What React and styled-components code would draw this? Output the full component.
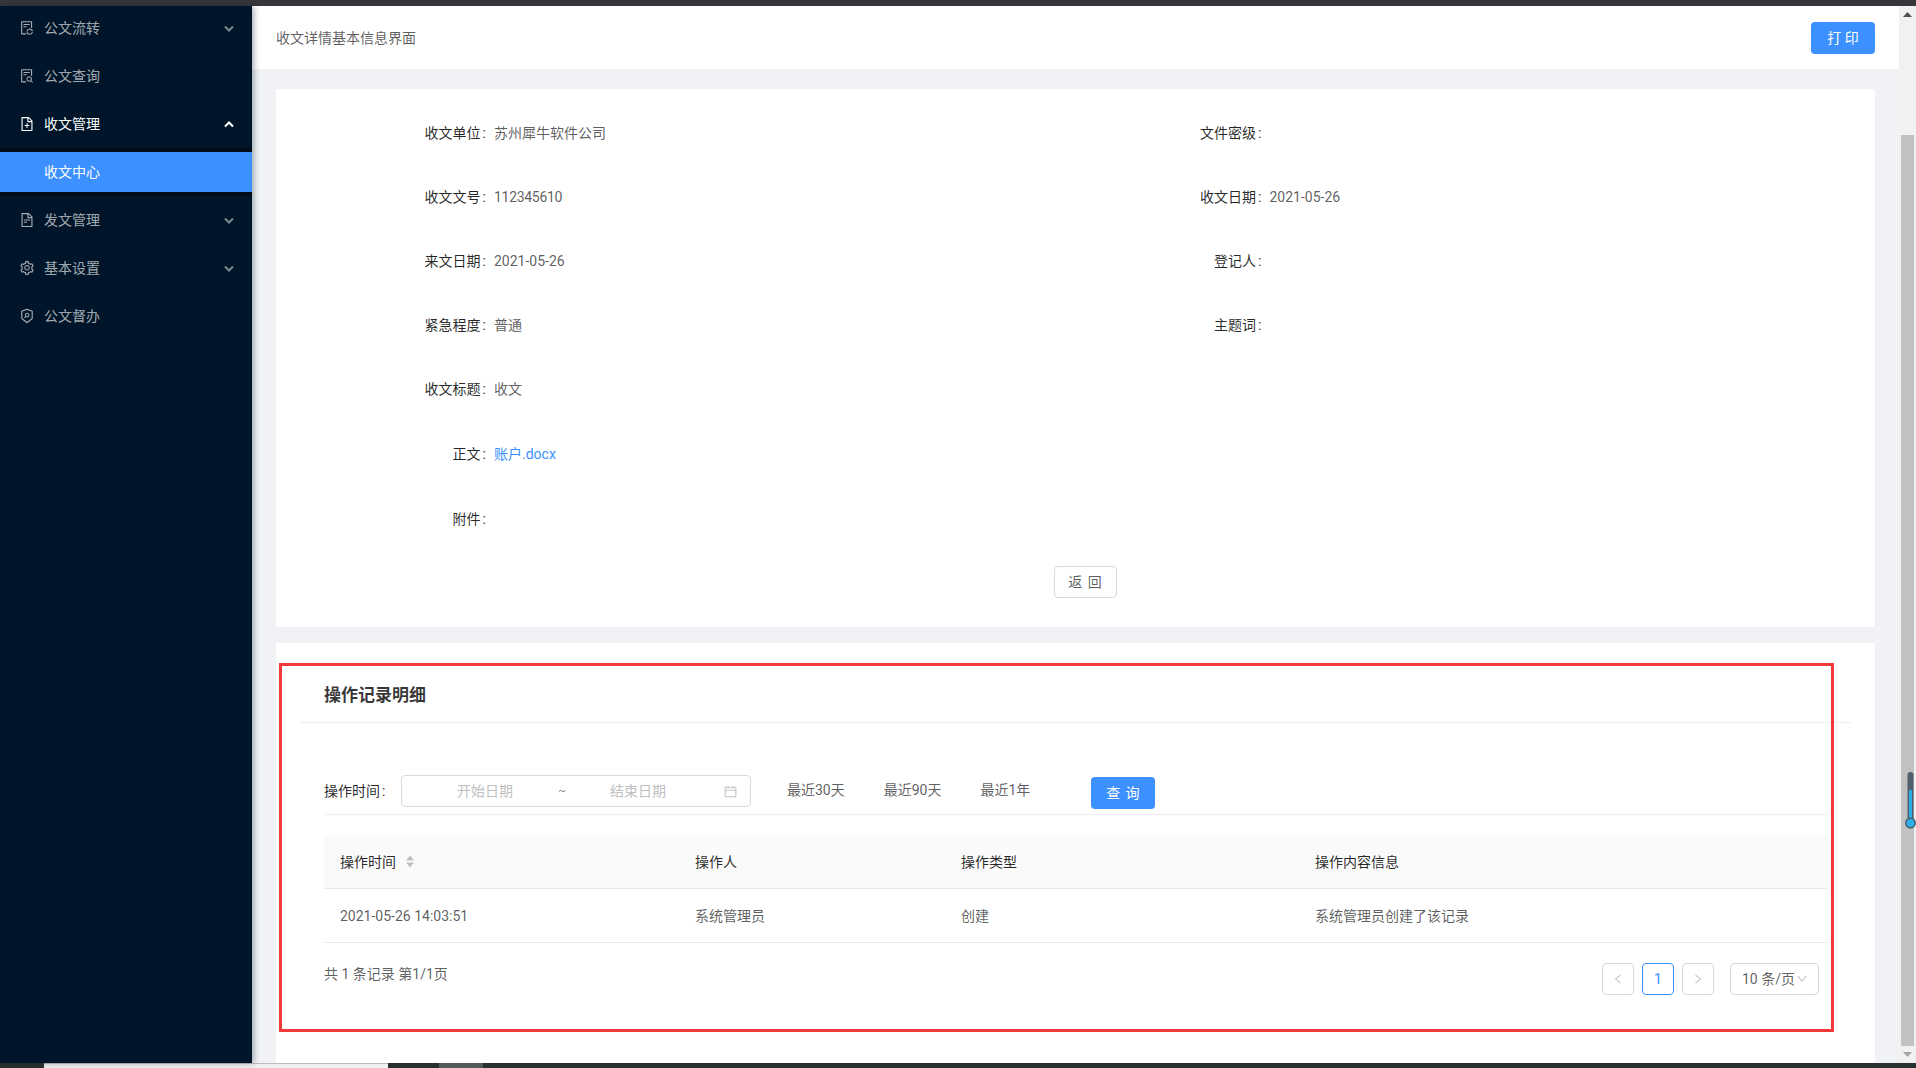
import React from 'react'
import styled, { createGlobalStyle } from 'styled-components'
import {
  AiOutlineFileSync,
  AiOutlineFileSearch,
  AiOutlineFileAdd,
  AiOutlineFileText,
  AiOutlineSetting,
  AiOutlineSecurityScan,
  AiOutlineCalendar,
  AiOutlineLeft,
  AiOutlineRight,
  AiOutlineDown,
} from 'react-icons/ai'

const FONT = 'Roboto, "Noto Sans CJK SC", sans-serif'

const GlobalStyle = createGlobalStyle`
  html, body {
    margin: 0;
    padding: 0;
    overflow: hidden;
    background: #f0f2f5;
  }
  * {
    box-sizing: border-box;
  }
`

const Page = styled.div`
  width: 1916px;
  height: 1068px;
  display: flex;
  flex-direction: column;
  font-family: ${FONT};
  font-size: 14px;
  line-height: 22px;
  color: rgba(0, 0, 0, 0.65);
  overflow: hidden;
`

const TopStrip = styled.div`
  height: 6px;
  flex: none;
  background: #36373b;
`

const Body = styled.div`
  flex: 1;
  min-height: 0;
  display: flex;
`

const Sidebar = styled.aside`
  width: 252px;
  flex: none;
  background: #001529;
  box-shadow: 2px 0 6px rgba(0, 21, 41, 0.35);
  position: relative;
  z-index: 2;
  padding-top: 2px;
  display: flex;
  flex-direction: column;
  gap: 8px;
`

const MenuItem = styled.div`
  height: 40px;
  display: flex;
  align-items: center;
  padding: 0 18px 0 19px;
  color: ${props => (props.$open ? '#fff' : 'rgba(255, 255, 255, 0.65)')};
  svg.menu-icon {
    font-size: 16px;
    margin-right: 9px;
  }
`

const MenuLabel = styled.span`
  flex: 1;
`

const SubMenu = styled.div`
  background: #000c17;
  padding: 4px 0;
  margin: -4px 0;
`

const SubItem = styled.div`
  height: 40px;
  display: flex;
  align-items: center;
  padding-left: 44px;
  background: #3d90ff;
  color: #fff;
`

const Chevron = ({ up }) => (
  <svg width="10" height="7" viewBox="0 0 10 7" fill="none" opacity={up ? 1 : 0.75}>
    <path
      d={up ? 'M1 5.5 L5 1.5 L9 5.5' : 'M1 1.5 L5 5.5 L9 1.5'}
      stroke="currentColor"
      strokeWidth="2"
    />
  </svg>
)

const Content = styled.main`
  flex: 1;
  min-width: 0;
  display: flex;
  flex-direction: column;
`

const HeaderBar = styled.header`
  height: 63px;
  flex: none;
  background: #fff;
  display: flex;
  align-items: center;
  justify-content: space-between;
  padding: 0 24px;
  color: rgba(0, 0, 0, 0.65);
`

const PrimaryButton = styled.button`
  width: 64px;
  height: 32px;
  border: 0;
  border-radius: 4px;
  background: #3d90ff;
  color: #fff;
  font: inherit;
  letter-spacing: ${props => props.$spacing}px;
  padding: 0;
`

const Card = styled.section`
  margin: ${props => props.$margin};
  background: #fff;
  position: relative;
`

const InfoCard = styled(Card)`
  height: 538px;
  padding-top: 12px;
  display: flex;
  flex-direction: column;
`

const FormRow = styled.div`
  height: ${props => props.$height}px;
  display: flex;
  align-items: center;
`

const Field = styled.div`
  width: 800px;
  display: flex;
  align-items: center;
`

const FieldLabel = styled.span`
  width: ${props => props.$width}px;
  flex: none;
  margin-right: 8px;
  text-align: right;
  color: rgba(0, 0, 0, 0.85);
  white-space: nowrap;
`

const Colon = styled.span`
  margin-left: 2px;
`

// the original latin face has narrower digits than Roboto
const Serial = styled.span`
  letter-spacing: -0.3px;
`

const DocLink = styled.a`
  color: #3d90ff;
  text-decoration: none;
`

const ButtonRow = styled.div`
  display: flex;
  justify-content: center;
  margin-top: 15px;
  padding-left: 20px;
`

const BackButton = styled.button`
  width: 63px;
  height: 32px;
  border: 1px solid #d9d9d9;
  border-radius: 4px;
  background: #fff;
  color: rgba(0, 0, 0, 0.65);
  font: inherit;
  letter-spacing: 1px;
  padding: 0;
`

const RecordCard = styled(Card)`
  flex: 1;
  min-height: 0;
  padding-top: 23px;
`

const CardHeader = styled.div`
  height: 57px;
  margin: 0 24px;
  padding: 2px 0 0 24px;
  border-bottom: 1px solid #eee;
  display: flex;
  align-items: center;
`

const CardTitle = styled.h3`
  margin: 0;
  font-size: 17px;
  font-weight: 700;
  color: rgba(0, 0, 0, 0.78);
`

const RecordBody = styled.div`
  margin: 0 48px;
`

const FilterBar = styled.div`
  margin-top: 51px;
  padding-bottom: 5px;
  border-bottom: 1px solid #eee;
  display: flex;
  align-items: flex-start;
`

const FilterLabel = styled.span`
  width: 77px;
  flex: none;
  margin-top: 6px;
  color: rgba(0, 0, 0, 0.85);
`

const RangePicker = styled.div`
  width: 350px;
  height: 32px;
  flex: none;
  margin-top: 1px;
  border: 1px solid #d9d9d9;
  border-radius: 4px;
  display: flex;
  align-items: center;
  padding: 0 12px 0 8px;
  color: #bfbfbf;
  svg {
    font-size: 15px;
    color: #c4c4c4;
  }
`

const RangeInput = styled.span`
  width: 150px;
  flex: none;
  text-align: center;
`

const RangeSep = styled.span`
  width: 2px;
  flex: none;
  display: flex;
  justify-content: center;
  margin-left: 1px;
  color: rgba(0, 0, 0, 0.45);
  font-size: 12px;
`

const RangeIcon = styled.span`
  margin-left: auto;
  display: flex;
`

const QuickLinks = styled.div`
  display: flex;
  gap: 39px;
  margin: 5px 0 0 36px;
`

const QuickLink = styled.span`
  white-space: nowrap;
`

const QueryWrap = styled.div`
  margin: 3px 0 0 61px;
  display: flex;
`

const Table = styled.div`
  margin-top: 20px;
`

const TableRow = styled.div`
  display: grid;
  grid-template-columns: 355px 266px 354px 1fr;
  align-items: center;
  height: 54px;
  border-bottom: 1px solid #e8e8e8;
  background: ${props => (props.$head ? '#fafafa' : '#fff')};
  border-radius: ${props => (props.$head ? '4px 4px 0 0' : '0')};
  color: ${props => (props.$head ? 'rgba(0, 0, 0, 0.85)' : 'rgba(0, 0, 0, 0.65)')};
`

const Cell = styled.div`
  padding-left: 16px;
  display: flex;
  align-items: center;
  gap: 9px;
`

const SortIcon = () => (
  <svg width="10" height="13" viewBox="0 0 10 13">
    <path d="M5 0.5 L9 5.5 H1 Z" fill="#bfbfbf" />
    <path d="M5 12.5 L9 7.5 H1 Z" fill="#bfbfbf" />
  </svg>
)

const TableFooter = styled.div`
  display: flex;
  justify-content: space-between;
  align-items: flex-start;
  margin-top: 20px;
  padding-right: 8px;
`

const Pager = styled.div`
  display: flex;
  align-items: center;
  gap: 8px;
`

const PageButton = styled.div`
  width: 32px;
  height: 32px;
  border: 1px solid ${props => (props.$active ? '#3d90ff' : '#d9d9d9')};
  border-radius: 4px;
  display: flex;
  align-items: center;
  justify-content: center;
  font-size: ${props => (props.$active ? 14 : 12)}px;
  color: ${props => (props.$active ? '#3d90ff' : '#bfbfbf')};
`

const PageSize = styled.div`
  width: 89px;
  height: 32px;
  margin-left: 8px;
  border: 1px solid #d9d9d9;
  border-radius: 4px;
  display: flex;
  align-items: center;
  padding-left: 11px;
  white-space: nowrap;
  svg {
    font-size: 12px;
    color: #bfbfbf;
    margin-left: 1px;
  }
`

// red box someone drew over the screenshot
const Highlight = styled.div`
  position: absolute;
  left: 3px;
  right: 41px;
  top: 20px;
  bottom: 31px;
  border: 3px solid #f33a3a;
  pointer-events: none;
`

const ScrollTrack = styled.div`
  width: 17px;
  flex: none;
  background: #f1f1f1;
  display: flex;
  flex-direction: column;
  align-items: center;
  position: relative;
`

const ScrollArrow = styled.div`
  height: 17px;
  flex: none;
  display: flex;
  align-items: center;
  justify-content: center;
`

const ScrollThumb = styled.div`
  width: 13px;
  flex: 1;
  background: #c1c1c1;
  margin: 112px 0 0;
`

const Thermometer = styled.svg`
  position: absolute;
  left: 6px;
  top: 766px;
`

const BottomStrip = styled.div`
  height: 5px;
  flex: none;
  display: flex;
  background: #283130;
`

const TaskTab = styled.div`
  width: 344px;
  margin-left: 44px;
  background: #f0f0f0;
  border-top: 1px solid #bdbdbd;
`

const TaskButton = styled.div`
  width: 44px;
  margin-left: 51px;
  background: #525a58;
`

const menuTop = [
  { label: '公文流转', icon: AiOutlineFileSync, arrow: true },
  { label: '公文查询', icon: AiOutlineFileSearch },
]

const menuBottom = [
  { label: '发文管理', icon: AiOutlineFileText, arrow: true },
  { label: '基本设置', icon: AiOutlineSetting, arrow: true },
  { label: '公文督办', icon: AiOutlineSecurityScan },
]

const columns = ['操作时间', '操作人', '操作类型', '操作内容信息']

const renderMenu = item => {
  const Icon = item.icon
  return (
    <MenuItem key={item.label}>
      <Icon className="menu-icon" />
      <MenuLabel>{item.label}</MenuLabel>
      {item.arrow && <Chevron />}
    </MenuItem>
  )
}

const Label = ({ width, children }) => (
  <FieldLabel $width={width}>
    {children}
    <Colon>:</Colon>
  </FieldLabel>
)

const App = () => (
  <Page>
    <GlobalStyle />
    <TopStrip />
    <Body>
      <Sidebar>
        {menuTop.map(renderMenu)}
        <MenuItem $open>
          <AiOutlineFileAdd className="menu-icon" />
          <MenuLabel>收文管理</MenuLabel>
          <Chevron up />
        </MenuItem>
        <SubMenu>
          <SubItem>收文中心</SubItem>
        </SubMenu>
        {menuBottom.map(renderMenu)}
      </Sidebar>

      <Content>
        <HeaderBar>
          <span>收文详情基本信息界面</span>
          <PrimaryButton $spacing={0}>打 印</PrimaryButton>
        </HeaderBar>

        <InfoCard $margin="20px 24px 0">
          <FormRow $height={64}>
            <Field>
              <Label width={210}>收文单位</Label>
              <span>苏州犀牛软件公司</span>
            </Field>
            <Field>
              <Label width={186}>文件密级</Label>
            </Field>
          </FormRow>
          <FormRow $height={64}>
            <Field>
              <Label width={210}>收文文号</Label>
              <Serial>112345610</Serial>
            </Field>
            <Field>
              <Label width={186}>收文日期</Label>
              <span>2021-05-26</span>
            </Field>
          </FormRow>
          <FormRow $height={64}>
            <Field>
              <Label width={210}>来文日期</Label>
              <span>2021-05-26</span>
            </Field>
            <Field>
              <Label width={186}>登记人</Label>
            </Field>
          </FormRow>
          <FormRow $height={64}>
            <Field>
              <Label width={210}>紧急程度</Label>
              <span>普通</span>
            </Field>
            <Field>
              <Label width={186}>主题词</Label>
            </Field>
          </FormRow>
          <FormRow $height={64}>
            <Field>
              <Label width={210}>收文标题</Label>
              <span>收文</span>
            </Field>
          </FormRow>
          <FormRow $height={65}>
            <Field>
              <Label width={210}>正文</Label>
              <DocLink href="#">账户.docx</DocLink>
            </Field>
          </FormRow>
          <FormRow $height={65}>
            <Field>
              <Label width={210}>附件</Label>
            </Field>
          </FormRow>
          <ButtonRow>
            <BackButton>返 回</BackButton>
          </ButtonRow>
        </InfoCard>

        <RecordCard $margin="16px 24px 0">
          <CardHeader>
            <CardTitle>操作记录明细</CardTitle>
          </CardHeader>
          <RecordBody>
            <FilterBar>
              <FilterLabel>
                操作时间
                <Colon>:</Colon>
              </FilterLabel>
              <RangePicker>
                <RangeInput>开始日期</RangeInput>
                <RangeSep>~</RangeSep>
                <RangeInput>结束日期</RangeInput>
                <RangeIcon>
                  <AiOutlineCalendar />
                </RangeIcon>
              </RangePicker>
              <QuickLinks>
                <QuickLink>最近30天</QuickLink>
                <QuickLink>最近90天</QuickLink>
                <QuickLink>最近1年</QuickLink>
              </QuickLinks>
              <QueryWrap>
                <PrimaryButton $spacing={1}>查 询</PrimaryButton>
              </QueryWrap>
            </FilterBar>

            <Table>
              <TableRow $head>
                {columns.map((col, index) => (
                  <Cell key={col}>
                    {col}
                    {index === 0 && <SortIcon />}
                  </Cell>
                ))}
              </TableRow>
              <TableRow>
                <Cell>2021-05-26 14:03:51</Cell>
                <Cell>系统管理员</Cell>
                <Cell>创建</Cell>
                <Cell>系统管理员创建了该记录</Cell>
              </TableRow>
            </Table>

            <TableFooter>
              <span>共 1 条记录 第1/1页</span>
              <Pager>
                <PageButton>
                  <AiOutlineLeft />
                </PageButton>
                <PageButton $active>1</PageButton>
                <PageButton>
                  <AiOutlineRight />
                </PageButton>
                <PageSize>
                  10 条/页
                  <AiOutlineDown />
                </PageSize>
              </Pager>
            </TableFooter>
          </RecordBody>
          <Highlight />
        </RecordCard>
      </Content>

      <ScrollTrack>
        <ScrollArrow>
          <svg width="9" height="5" viewBox="0 0 9 5">
            <path d="M4.5 0 L9 5 H0 Z" fill="#505050" />
          </svg>
        </ScrollArrow>
        <ScrollThumb />
        <ScrollArrow>
          <svg width="9" height="5" viewBox="0 0 9 5">
            <path d="M0 0 H9 L4.5 5 Z" fill="#a3a3a3" />
          </svg>
        </ScrollArrow>
        <Thermometer width="11" height="58" viewBox="0 0 11 58">
          <rect x="2.5" y="0" width="6" height="50" rx="3" fill="#4f5f6b" />
          <rect x="4" y="18" width="3" height="34" fill="#2eaee6" />
          <circle cx="5.5" cy="51" r="5.5" fill="#4a5a66" />
          <circle cx="5.5" cy="51" r="4" fill="#2eaee6" />
        </Thermometer>
      </ScrollTrack>
    </Body>
    <BottomStrip>
      <TaskTab />
      <TaskButton />
    </BottomStrip>
  </Page>
)

export default App
